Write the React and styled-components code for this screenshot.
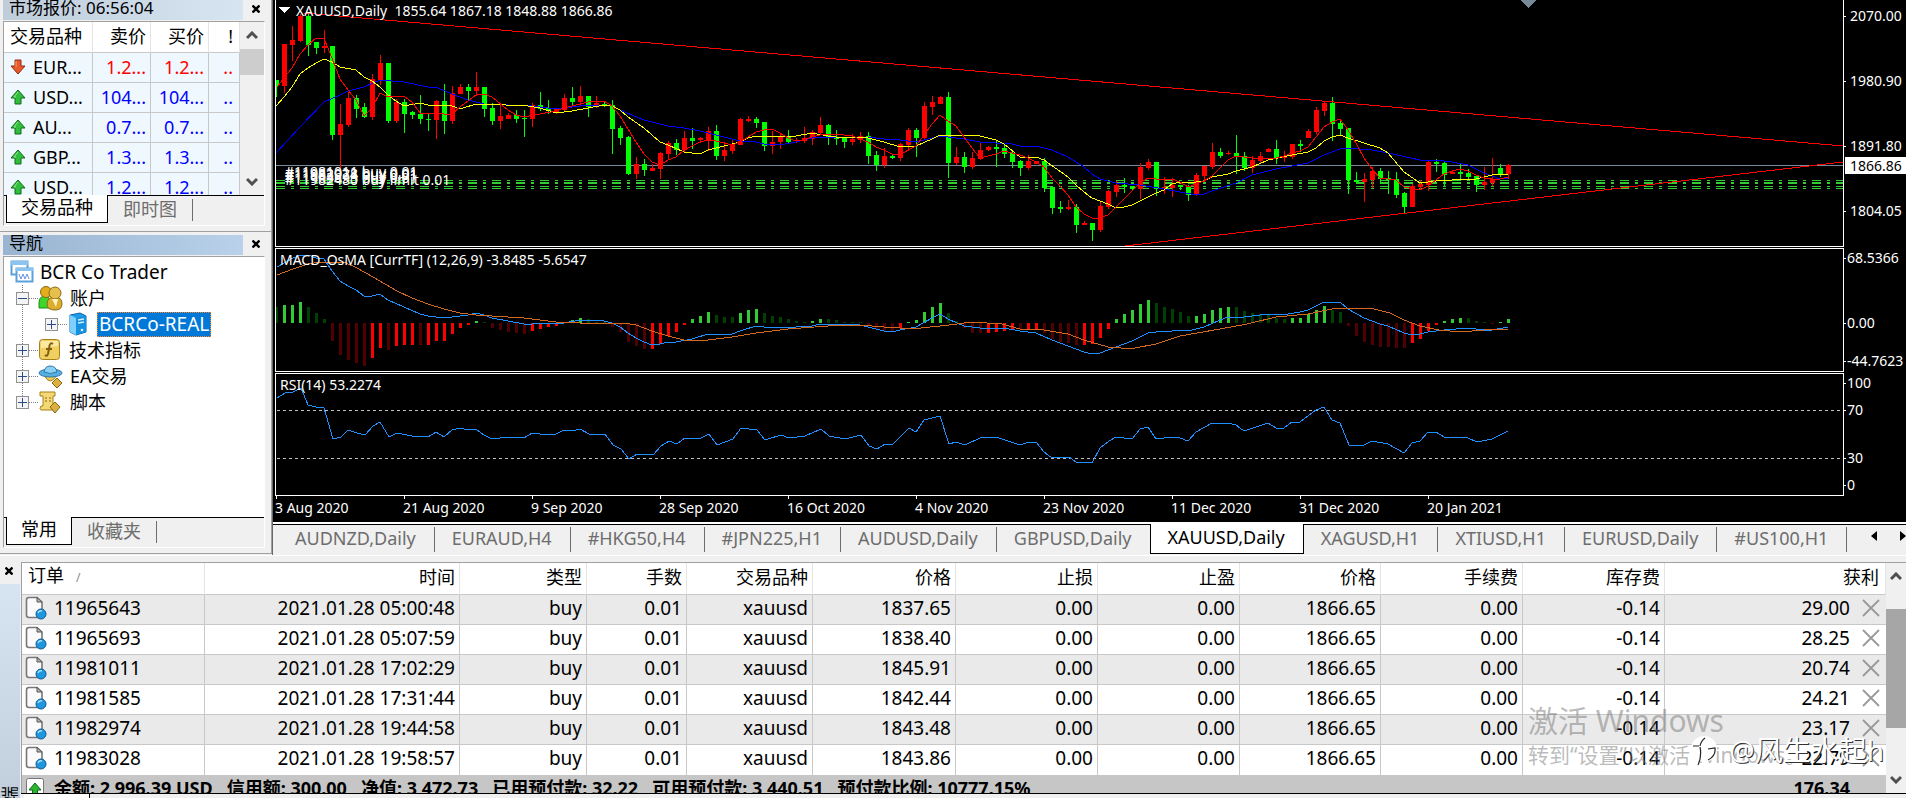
import React from 'react';
import styled, { createGlobalStyle, css } from 'styled-components';

const quotes = [
  { symbol: 'EUR...', bid: '1.2...', ask: '1.2...', down: true },
  { symbol: 'USD...', bid: '104...', ask: '104...' },
  { symbol: 'AU...', bid: '0.7...', ask: '0.7...' },
  { symbol: 'GBP...', bid: '1.3...', ask: '1.3...' },
  { symbol: 'USD...', bid: '1.2...', ask: '1.2...' },
];

const chartTabs = [
  'AUDNZD,Daily', 'EURAUD,H4', '#HKG50,H4', '#JPN225,H1', 'AUDUSD,Daily', 'GBPUSD,Daily',
  'XAUUSD,Daily', 'XAGUSD,H1', 'XTIUSD,H1', 'EURUSD,Daily', '#US100,H1',
];

const columns = [
  ['订单', 183], ['时间', 255], ['类型', 127], ['手数', 100], ['交易品种', 126], ['价格', 143],
  ['止损', 142], ['止盈', 142], ['价格', 141], ['手续费', 142], ['库存费', 142], ['获利', null],
];

const orders = [
  ['11965643', '2021.01.28 05:00:48', '1837.65', '29.00'],
  ['11965693', '2021.01.28 05:07:59', '1838.40', '28.25'],
  ['11981011', '2021.01.28 17:02:29', '1845.91', '20.74'],
  ['11981585', '2021.01.28 17:31:44', '1842.44', '24.21'],
  ['11982974', '2021.01.28 19:44:58', '1843.48', '23.17'],
  ['11983028', '2021.01.28 19:58:57', '1843.86', '22.79'],
];

// direction, high, body top, body bottom, low
const candles = `g80,80,86,97 r44,44,86,93 r26,40,45,61 r14,16,41,42 g14,16,45,56 g42,42,48,54 r30,46,48,53 g46,46,135,140
r104,124,135,170 r92,98,125,127 g95,98,109,118 g103,107,117,118 r74,79,117,120 r55,63,80,85 g63,63,121,123 r99,102,121,123
g99,102,114,133 g111,112,115,119 g95,114,119,124 g113,119,120,131 r100,101,120,139 g84,101,121,134 r86,93,121,124 r84,87,94,94
g84,87,91,101 r72,87,91,96 g87,87,109,117 g103,108,121,125 r105,116,121,129 r113,115,119,119 g110,115,119,123 g110,118,119,137
r103,105,119,127 g92,105,109,111 g100,108,111,114 r109,109,112,114 r94,98,110,112 g87,98,102,107 r86,96,102,106 g96,96,107,117
r96,103,107,108 g102,104,106,107 g100,105,129,154 g126,128,138,145 g136,137,174,175 r157,164,174,179 g159,164,170,176 r164,168,171,171
r152,153,169,179 r141,143,154,159 g139,143,150,155 r131,138,150,153 g128,138,141,149 r137,138,140,143 r127,131,140,151 g125,131,156,160
r142,150,156,161 r140,144,151,154 r118,119,145,145 r116,119,121,122 g117,119,123,128 g122,122,146,151 r131,142,146,154 r133,136,142,149
g130,136,142,143 r138,140,141,143 r127,138,141,143 r130,132,139,145 r117,125,133,135 g124,125,138,145 g130,137,139,145 g138,138,142,148
r134,139,142,145 r132,136,140,143 g132,136,156,164 g151,155,165,171 r148,156,165,168 g154,156,158,159 r143,144,158,161 r128,130,145,151
g128,130,138,157 r102,106,138,139 r96,102,107,115 r96,97,104,104 g92,97,163,178 r147,157,163,165 g152,157,167,173 r152,158,167,169
r143,150,159,160 r146,147,150,151 g141,147,149,167 g144,148,154,158 g152,153,162,168 g160,161,168,176 r155,161,168,170 r161,161,164,164
g158,161,188,192 g187,187,208,214 g201,207,209,213 r200,207,209,210 g204,207,225,233 r221,223,225,225 g223,223,230,241 r201,206,230,232
r190,191,207,209 r181,185,192,197 g178,185,187,193 g186,186,189,190 r163,167,189,199 r159,162,168,170 g162,162,189,196 r177,187,189,194
r178,185,188,197 g185,185,187,190 g185,186,195,201 r173,175,195,196 r166,166,176,182 r143,152,167,169 g148,152,156,158 r151,153,154,155
g135,153,157,174 g152,156,168,171 r156,160,168,173 r152,156,161,163 r148,149,152,152 g140,149,158,164 r151,156,158,162 r144,144,157,159
g140,144,146,152 r129,131,138,138 r107,110,132,134 r101,103,111,116 g97,103,124,141 g120,123,129,136 g128,128,180,194 g172,180,182,184
r173,179,182,202 r167,171,180,188 g168,171,179,184 g171,178,180,194 g172,179,195,198 g192,193,207,213 r184,186,207,207 r180,184,187,190
r161,162,185,191 g159,162,164,172 g162,163,175,186 r170,172,174,174 g164,172,174,180 g169,173,177,180 g175,176,185,192 r167,182,185,190
r158,179,183,186 g164,168,174,177 r164,165,174,179`.split(/\s+/);

// upper case is a growing bar, lower case a shrinking one
const histogram = `g16 G18 G18 G21 g16 g10 g4 r18 r32 r37 r40 r43 R35 R25 r27 R23 R22 R22 r22 R22 R18 R18 R11 R5 R2 G2 g1 r5 r7 r9
r10 r11 R8 R6 R4 R3 r0 G3 G5 g4 g1 g1 r4 r9 r19 r23 r26 R26 R21 R13 R9 R2 G4 G7 G11 g8 g6 g6 G10 G13 G14 g10 g7 g6 g4 g2 g1 G2
G4 g4 g3 g1 g1 g1 r3 r6 r8 r8 R5 G1 G3 G11 G16 G20 g10 g2 r5 r10 r10 R10 R9 R8 R7 r6 R6 R6 r10 r16 r19 r20 r22 R22 R21 R15 R6
G4 G9 G13 G19 G23 g20 g16 g14 g11 g7 G7 G9 G13 G15 G16 g16 g12 g10 g9 g8 g5 g4 G5 G5 G9 G13 G17 g13 g11 r3 r13 r19 r22 r24 r24
r25 r25 R20 R16 R8 R2 G2 G4 G5 g5 g2 g1 r1 G1 G4`.split(/\s+/);

const barColors = { G: '#32cd32', g: '#004000', R: '#ff0000', r: '#500000' };

const maRed = `277,87 292,68 300,54 308,45 316,38 324,39 328,48 340,79 348,90 356,100 364,116 372,108 380,93 388,97 404,96 412,102
420,113 444,114 452,114 460,107 476,95 484,94 492,97 508,110 516,115 524,117 540,114 556,111 564,108 572,106 588,102 604,101 612,106
620,116 628,129 636,142 644,154 652,162 660,165 668,160 676,157 684,150 692,146 700,142 708,140 716,141 724,143 732,145 740,142
748,137 756,132 764,130 772,129 780,133 788,138 796,141 804,140 812,137 820,135 828,134 836,134 852,136 860,139 868,142 876,147
884,150 892,154 900,155 908,150 916,146 924,135 932,124 940,115 948,121 956,126 964,137 972,148 980,158 988,156 996,154 1004,151
1012,153 1020,155 1028,158 1036,162 1044,167 1052,178 1060,186 1068,195 1076,207 1084,214 1092,218 1100,218 1108,215 1116,207
1124,199 1132,191 1140,183 1148,178 1156,179 1172,179 1180,182 1188,187 1196,184 1204,181 1212,176 1220,168 1228,160 1236,156
1244,157 1252,158 1276,158 1284,156 1292,153 1300,151 1308,147 1316,137 1324,127 1332,122 1340,119 1348,130 1356,143 1364,158
1372,169 1380,178 1396,180 1404,187 1420,190 1428,186 1436,180 1444,174 1452,171 1460,169 1468,171 1476,175 1484,178 1492,179
1500,179 1508,177`;

const maYellow = `276,106 284,97 292,87 300,74 308,68 316,63 324,59 332,62 340,67 356,70 364,77 372,81 380,87 388,95 396,101 404,106
420,103 428,105 452,106 460,109 476,104 484,104 528,106 540,108 556,113 572,111 588,108 604,105 612,106 620,110 628,117 644,128
652,135 660,142 668,145 684,152 700,154 708,150 724,146 740,142 748,138 756,136 780,136 788,137 796,136 812,133 828,136 844,138
860,137 868,138 884,142 900,147 916,146 932,139 940,135 956,135 980,136 996,140 1004,144 1020,157 1036,157 1044,160 1068,177
1076,185 1084,192 1092,198 1100,201 1108,204 1116,208 1124,207 1132,205 1140,201 1148,197 1156,193 1164,190 1172,184 1180,182
1188,183 1196,182 1204,181 1212,177 1228,174 1236,171 1252,167 1268,160 1292,155 1308,152 1316,148 1324,141 1332,137 1340,135
1348,138 1364,143 1380,148 1388,153 1404,172 1420,183 1436,181 1452,180 1476,179 1492,175 1508,174`;

const maBlue = `276,153 300,127 324,102 340,95 348,91 364,87 380,80 404,82 428,87 438,88 452,94 468,100 484,104 508,105 532,106
548,108 564,108 580,106 604,105 612,106 620,110 644,120 668,126 684,128 700,131 724,137 740,141 756,142 764,144 780,145 796,142
812,138 828,137 868,137 884,139 900,140 916,142 932,138 940,136 948,137 964,139 980,142 996,143 1012,144 1020,146 1036,146
1052,150 1068,157 1084,167 1092,174 1100,179 1116,183 1140,185 1164,189 1180,192 1196,195 1204,194 1212,191 1236,183 1252,175
1276,169 1292,166 1308,163 1324,155 1340,149 1348,148 1372,150 1388,153 1420,160 1436,160 1452,162 1468,165 1484,173 1500,179
1508,178`;

const macdLine = `277,267 293,258 301,255 308,255 316,258 324,259 332,271 340,281 348,286 356,290 364,296 372,296 380,294 388,300
404,307 420,314 428,316 436,317 444,318 452,317 468,315 476,313 484,315 492,318 508,321 524,324 532,324 564,323 580,320 596,320
604,321 612,323 620,327 628,333 636,338 644,342 652,345 660,344 668,342 676,342 692,339 708,334 716,335 732,334 740,331 756,326
764,327 796,327 812,326 820,324 840,324 860,325 868,327 884,331 892,332 900,330 916,327 932,318 940,314 948,319 964,326 980,328
1004,328 1020,331 1036,333 1052,340 1068,346 1084,352 1092,354 1100,353 1108,350 1124,344 1132,341 1148,333 1156,332 1172,331
1180,330 1188,331 1204,327 1220,320 1228,317 1244,317 1268,314 1288,314 1300,312 1308,310 1324,302 1340,302 1348,309 1364,318
1380,324 1388,326 1404,333 1412,335 1420,334 1428,332 1444,330 1468,328 1484,330 1492,330 1508,327`;

const signalLine = `277,275 293,269 308,264 320,262 344,262 357,268 373,277 397,291 412,298 428,304 444,309 460,313 476,315 508,317
524,318 556,322 580,323 597,323 624,323 636,325 652,331 668,336 684,340 708,340 732,337 756,333 788,329 828,326 860,325 884,327
900,328 921,328 949,325 972,322 1002,324 1020,329 1044,330 1068,334 1084,340 1108,347 1121,348 1135,348 1156,344 1180,336
1220,329 1247,324 1276,317 1308,314 1332,309 1345,308 1370,308 1390,313 1404,320 1420,326 1439,330 1460,332 1484,330 1508,329`;

const rsiLine = `277,398 285,393 293,392 301,388 308,405 316,407 324,408 333,439 341,437 348,430 357,433 365,435 373,426 380,422
389,437 397,433 412,436 428,437 436,432 444,437 452,430 460,428 468,430 476,429 484,435 492,439 508,437 524,438 532,433 548,435
556,434 564,430 572,431 580,429 589,434 605,434 613,445 621,449 629,459 637,454 653,455 661,446 669,441 677,444 685,438 701,438
709,434 717,445 733,439 741,428 757,430 765,440 781,435 789,438 805,436 821,429 829,436 845,439 861,435 869,446 877,449 885,444
892,445 909,428 916,432 924,420 940,416 949,444 956,442 965,445 980,438 996,437 1020,445 1029,442 1036,442 1044,452 1052,458
1069,457 1076,462 1092,463 1100,448 1109,441 1116,437 1132,439 1140,429 1148,427 1156,439 1172,437 1180,438 1188,441 1196,432
1212,423 1228,423 1236,425 1244,431 1268,423 1276,428 1284,428 1292,422 1300,422 1316,410 1324,407 1332,420 1340,423 1349,445
1364,445 1372,441 1388,444 1404,453 1412,443 1420,441 1428,432 1436,432 1444,437 1468,438 1477,442 1492,439 1508,431`;

const orderLines = [
  [180, '#11981011 buy 0.01'],
  [182, '#11983028 buy 0.01'],
  [183, '#11982974 buy 0.01'],
  [186, '#11965693 buy 0.01'],
  [188, '#11982480 buy limit 0.01'],
];

const dates = [
  '3 Aug 2020', '21 Aug 2020', '9 Sep 2020', '28 Sep 2020', '16 Oct 2020',
  '4 Nov 2020', '23 Nov 2020', '11 Dec 2020', '31 Dec 2020', '20 Jan 2021',
];

const Line = ({ points, color }) => (
  <polyline points={points} fill="none" stroke={color} strokeWidth="1" />
);

const Chevron = ({ up }) => (
  <svg width="12" height="9" viewBox="0 0 12 9">
    <path d={up ? 'M1 7 L6 2 L11 7' : 'M1 2 L6 7 L11 2'} fill="none" stroke="#505050" strokeWidth="3" />
  </svg>
);

const Cross = () => (
  <svg width="8" height="8" viewBox="0 0 8 8">
    <path d="M0.5 0.5 L7.5 7.5 M7.5 0.5 L0.5 7.5" stroke="#000" strokeWidth="2.4" />
  </svg>
);

const QuoteArrow = ({ down }) => (
  <svg width="16" height="16" viewBox="0 0 16 16">
    <path
      d={down ? 'M5 1 H11 V7 H15 L8 15 L1 7 H5 Z' : 'M8 1 L15 9 H11 V15 H5 V9 H1 Z'}
      fill={down ? '#e8592b' : '#2fbf3c'}
      stroke={down ? '#8c2a12' : '#11681b'}
      strokeLinejoin="round"
    />
    <path d={down ? 'M6 2 V8' : 'M8 3 L4 8 H6'} fill="none" stroke={down ? '#ffa27a' : '#93ea8c'} />
  </svg>
);

const TerminalIcon = () => (
  <svg width="24" height="24" viewBox="0 0 24 24">
    <rect x="1.5" y="1.5" width="16" height="13" fill="#fff" stroke="#5ba0d8" strokeWidth="2" />
    <rect x="1" y="1" width="17" height="4" fill="#8cc4f0" />
    <rect x="6.5" y="8.5" width="16" height="13" fill="#fff" stroke="#5ba0d8" strokeWidth="2" />
    <rect x="6" y="8" width="17" height="3" fill="#8cc4f0" />
    <path d="M9 14 L11 19 L13 14 L15 19 L17 14 L19 19" fill="none" stroke="#6a8fe0" />
  </svg>
);

const AccountsIcon = () => (
  <svg width="25" height="25" viewBox="0 0 25 25">
    <path d="M1 17 Q1 10 7 10 Q12 10 12 17 V22 H1 Z" fill="#3fd62c" stroke="#1c8a14" />
    <circle cx="8" cy="6" r="5.5" fill="#e5ad1e" stroke="#8a650c" />
    <path d="M9 18 Q9 11 17 11 Q24 11 24 18 Q24 24 17 24 Q9 24 9 18 Z" fill="#dcae30" stroke="#8a6914" />
    <circle cx="17" cy="7" r="6" fill="#e6c04c" stroke="#8a6914" />
    <path d="M14 13 L18 21 L20 13" fill="#fff3bf" />
  </svg>
);

const ServerIcon = () => (
  <svg width="24" height="24" viewBox="0 0 24 24">
    <path d="M3 3 L13 1 L19 4 V20 L9 23 L3 20 Z" fill="#1f9ce8" stroke="#0f62a8" />
    <path d="M3 3 L9 6 V23 L3 20 Z" fill="#7fd0ff" />
    <path d="M9 6 L19 4 V20 L9 23 Z" fill="#1690e0" />
    <path d="M11 8 L17 7 M11 11 L17 10" stroke="#d5f0ff" strokeWidth="1.5" />
    <circle cx="15" cy="18" r="1.3" fill="#d5f0ff" />
  </svg>
);

const FunctionIcon = () => (
  <svg width="24" height="24" viewBox="0 0 24 24">
    <rect x="1.5" y="1.5" width="20" height="20" rx="3" fill="#f0d060" stroke="#a88018" />
    <path d="M3 10 V3 H20 V8 Z" fill="#fae9a0" />
    <path d="M15 6 Q12 4 11.5 8 L10 16 Q9 19 7 17 M8 11 H14" fill="none" stroke="#806010" strokeWidth="2" />
  </svg>
);

const ExpertIcon = () => (
  <svg width="25" height="25" viewBox="0 0 25 25">
    <path d="M6 11 Q12 23 19 11 Z" fill="#f0cc52" stroke="#a88018" />
    <ellipse cx="12.5" cy="9" rx="11.5" ry="4" fill="#57aee0" stroke="#2d77a8" />
    <path d="M6 8 Q7 2 12 2 Q18 2 19 8 Q12 11 6 8 Z" fill="#8ad0f4" stroke="#2d77a8" />
    <path d="M19 14 L24 19 L19 24 L14 19 Z" fill="#dcb040" stroke="#8a6914" />
  </svg>
);

const ScriptIcon = () => (
  <svg width="25" height="25" viewBox="0 0 25 25">
    <path d="M2 2 H17 V6 H15 V17 H17 V20 H3 Q1 19 3 16 H5 V6 H2 Z" fill="#f4d873" stroke="#a88018" />
    <path d="M7 8 H9 M11 8 H13 M7 11 H9 M11 11 H13" stroke="#8a6914" />
    <path d="M17 12 L22 17 L17 23 L12 17 Z" fill="#dcb040" stroke="#8a6914" />
  </svg>
);

const OrderIcon = () => (
  <svg width="22" height="24" viewBox="0 0 22 24">
    <path d="M4 1.5 H12 L17 6 V19 Q17 21.5 15 21.5 H4 Q1.5 21.5 1.5 19 V4 Q1.5 1.5 4 1.5 Z" fill="#fbfbfb" stroke="#777" strokeWidth="1.6" />
    <path d="M12 1.5 V6 H17 Z" fill="#bbb" stroke="#555" />
    <circle cx="16" cy="18" r="5" fill="#1e96e0" stroke="#0d5b96" />
    <path d="M13 17 Q14 14 17 15" fill="none" stroke="#a8e0ff" strokeWidth="1.4" />
  </svg>
);

const BalanceIcon = () => (
  <svg width="18" height="20" viewBox="0 0 18 20">
    <rect x="0.5" y="0.5" width="17" height="19" rx="2" fill="#fff" stroke="#777" />
    <path d="M9 5 L15 12 H11.5 V18 H6.5 V12 H3 Z" fill="#2ab52f" stroke="#11681b" />
  </svg>
);

const RemoveIcon = () => (
  <svg width="18" height="18" viewBox="0 0 18 18">
    <path d="M1 1 L17 17 M17 1 L1 17" stroke="#999" strokeWidth="1.8" />
  </svg>
);

const MarketWatch = () => (
  <Panel>
    <TitleRow>
      <Caption $pale>市场报价: 06:56:04</Caption>
      <CloseButton aria-label="关闭"><Cross /></CloseButton>
    </TitleRow>
    <Frame>
      <QuoteArea>
        <QuoteTable>
          <colgroup>
            <col width="89" />
            <col width="58" />
            <col width="58" />
            <col />
          </colgroup>
          <thead>
            <tr><th>交易品种</th><th>卖价</th><th>买价</th><th>!</th></tr>
          </thead>
          <tbody>
            {quotes.map((quote, i) => (
              <QuoteRow key={i} $down={quote.down}>
                <td><Symbol><QuoteArrow down={quote.down} />{quote.symbol}</Symbol></td>
                <td>{quote.bid}</td>
                <td>{quote.ask}</td>
                <td>..</td>
              </QuoteRow>
            ))}
          </tbody>
        </QuoteTable>
        <Scrollbar>
          <ScrollButton aria-label="上"><Chevron up /></ScrollButton>
          <Thumb $size={26} />
          <ScrollButton $last aria-label="下"><Chevron /></ScrollButton>
        </Scrollbar>
      </QuoteArea>
      <PanelTabs>
        <PanelTab $active>交易品种</PanelTab>
        <PanelTab>即时图</PanelTab>
      </PanelTabs>
    </Frame>
  </Panel>
);

const Navigator = () => (
  <Panel $spaced>
    <TitleRow>
      <Caption>导航</Caption>
      <CloseButton aria-label="关闭"><Cross /></CloseButton>
    </TitleRow>
    <Frame>
      <Tree>
        <TreeRow $indent={6}><TerminalIcon /><RootLabel>BCR Co Trader</RootLabel></TreeRow>
        <Branch>
          <TreeRow $indent={12}>
            <Expander $open aria-label="折叠" /><Dash /><AccountsIcon /><TreeLabel>账户</TreeLabel>
          </TreeRow>
          <TreeRow $indent={41}>
            <Expander aria-label="展开" /><Dash /><ServerIcon /><Selected>BCRCo-REAL</Selected>
          </TreeRow>
          <TreeRow $indent={12}>
            <Expander aria-label="展开" /><Dash /><FunctionIcon /><TreeLabel>技术指标</TreeLabel>
          </TreeRow>
          <TreeRow $indent={12}>
            <Expander aria-label="展开" /><Dash /><ExpertIcon /><TreeLabel>EA交易</TreeLabel>
          </TreeRow>
          <TreeRow $indent={12}>
            <Expander aria-label="展开" /><Dash /><ScriptIcon /><TreeLabel>脚本</TreeLabel>
          </TreeRow>
        </Branch>
      </Tree>
      <PanelTabs>
        <PanelTab $active>常用</PanelTab>
        <PanelTab>收藏夹</PanelTab>
      </PanelTabs>
    </Frame>
  </Panel>
);

const PriceChart = () => (
  <Plot $height={246}>
    <g transform="translate(-276 0)">
      <line x1="276" x2="4000" y1="165.5" y2="165.5" stroke="#778899" />
      {orderLines.map(([y]) => (
        <line key={y} x1="276" x2="4000" y1={y + 0.5} y2={y + 0.5} stroke="#32cd32" strokeDasharray="9 6 3 6" />
      ))}
      {candles.map((candle, i) => {
        const [high, top, bottom, low] = candle.slice(1).split(',').map(Number);
        const x = 276 + i * 8;
        return (
          <g key={i} fill={candle[0] === 'g' ? '#00ff00' : '#ff0000'}>
            <rect x={x} y={high} width="1" height={low - high} />
            <rect x={x - 2} y={top} width="5" height={bottom - top} />
          </g>
        );
      })}
      <Line points={maBlue} color="#0000ff" />
      <Line points={maYellow} color="#ffff00" />
      <Line points={maRed} color="#ff0000" />
      <Line points="304,13 1843,146" color="#ff0000" />
      <Line points="1125,246 1843,162" color="#ff0000" />
      <path d="M1520 0 H1537 L1528.5 8 Z" fill="#778899" />
      <path d="M279 7 H290 L284.5 13 Z" fill="#fff" />
    </g>
    {orderLines.map(([y, label]) => <text key={y} x="9" y={y - 3}>{label}</text>)}
  </Plot>
);

const MacdChart = () => (
  <Plot $height={122}>
    <g transform="translate(-276 -249)">
      {histogram.map((bar, i) => {
        const size = Number(bar.slice(1));
        const rising = bar[0].toLowerCase() === 'g';
        return (
          <rect key={i} x={275 + i * 8} y={rising ? 323 - size : 323} width="3" height={size} fill={barColors[bar[0]]} />
        );
      })}
      <Line points={macdLine} color="#1e90ff" />
      <Line points={signalLine} color="#d2691e" />
    </g>
  </Plot>
);

const RsiChart = () => (
  <Plot $height={121}>
    <g transform="translate(-276 -374)">
      <path d="M277 410.5 H4000 M277 458.5 H4000" stroke="#c0c0c0" strokeDasharray="3 3" />
      <Line points={rsiLine} color="#1e90ff" />
    </g>
  </Plot>
);

const ChartWindow = () => (
  <ChartColumn>
    <ChartArea>
      <Pane>
        <PlotBox $first>
          <PlotTitle $offset={16}>XAUUSD,Daily&nbsp; 1855.64 1867.18 1848.88 1866.86</PlotTitle>
          <PriceChart />
        </PlotBox>
        <Scale $rows="65px 65px 65px 24px" $top={7}>
          <Mark>2070.00</Mark><Mark>1980.90</Mark><Mark>1891.80</Mark><Mark>1804.05</Mark>
          <CurrentPrice>1866.86</CurrentPrice>
        </Scale>
      </Pane>
      <Pane>
        <PlotBox>
          <PlotTitle>MACD_OsMA [CurrTF] (12,26,9) -3.8485 -5.6547</PlotTitle>
          <MacdChart />
        </PlotBox>
        <Scale $rows="65px 38px 18px" $top={1}>
          <Mark $tight>68.5366</Mark><Mark $tight>0.00</Mark><Mark $tight>-44.7623</Mark>
        </Scale>
      </Pane>
      <Pane>
        <PlotBox>
          <PlotTitle>RSI(14) 53.2274</PlotTitle>
          <RsiChart />
        </PlotBox>
        <Scale $rows="27px 48px 27px 18px" $top={1}>
          <Mark $tight>100</Mark><Mark $tight>70</Mark><Mark $tight>30</Mark><Mark $tight>0</Mark>
        </Scale>
      </Pane>
      <DateAxis>{dates.map((date) => <DateMark key={date}>{date}</DateMark>)}</DateAxis>
    </ChartArea>
    <ChartTabs>
      {chartTabs.map((tab) => (
        <ChartTab key={tab} $active={tab === 'XAUUSD,Daily'}>{tab}</ChartTab>
      ))}
      <TabArrows>
        <ArrowButton aria-label="左">
          <svg width="6" height="10"><path d="M6 0 V10 L0 5 Z" /></svg>
        </ArrowButton>
        <ArrowButton aria-label="右">
          <svg width="6" height="10"><path d="M0 0 V10 L6 5 Z" /></svg>
        </ArrowButton>
      </TabArrows>
    </ChartTabs>
  </ChartColumn>
);

const Terminal = () => (
  <TerminalRow>
    <Side>
      <CloseButton aria-label="关闭"><Cross /></CloseButton>
      <SideCaption>终端</SideCaption>
    </Side>
    <TerminalMain>
      <OrderArea>
        <OrderBody>
          <OrderTable>
            <colgroup>
              {columns.map(([, width], i) => <col key={i} width={width || undefined} />)}
            </colgroup>
            <thead>
              <tr>
                {columns.map(([title], i) => <th key={i}>{title}{i === 0 && <SortMark>/</SortMark>}</th>)}
              </tr>
            </thead>
            <tbody>
              {orders.map(([id, time, open, profit]) => (
                <tr key={id}>
                  <td><OrderCell><OrderIcon />{id}</OrderCell></td>
                  <td>{time}</td>
                  <td>buy</td>
                  <td>0.01</td>
                  <td>xauusd</td>
                  <td>{open}</td>
                  <td>0.00</td>
                  <td>0.00</td>
                  <td>1866.65</td>
                  <td>0.00</td>
                  <td>-0.14</td>
                  <td>
                    <Profit>{profit}<button aria-label="平仓"><RemoveIcon /></button></Profit>
                  </td>
                </tr>
              ))}
            </tbody>
          </OrderTable>
          <Summary>
            <BalanceIcon />
            <Balance>
              <span>余额: 2 996.39 USD</span>
              <span>信用额: 300.00</span>
              <span>净值: 3 472.73</span>
              <span>已用预付款: 32.22</span>
              <span>可用预付款: 3 440.51</span>
              <span>预付款比例: 10777.15%</span>
            </Balance>
            <Total>176.34</Total>
          </Summary>
        </OrderBody>
        <Scrollbar $wide>
          <ScrollButton aria-label="上"><Chevron up /></ScrollButton>
          <Thumb $size={119} $dark />
          <ScrollButton $last aria-label="下"><Chevron /></ScrollButton>
        </Scrollbar>
      </OrderArea>
      <BottomTabs><BottomTab /></BottomTabs>
      <Activation>
        <p>激活 Windows</p>
        <small>转到“设置”以激活 Windows。</small>
      </Activation>
      <Author>
        <svg width="28" height="32" viewBox="0 0 28 32">
          <circle cx="14" cy="15" r="13" fill="#fff" />
          <path d="M15 4 Q11 7 10 12 M3 12 H9 M10 13 Q12 22 8 31 M18 15 L25 14 Q26 22 18 26" fill="none" stroke="#222" strokeWidth="1.2" />
        </svg>
        @风生水起h
      </Author>
    </TerminalMain>
  </TerminalRow>
);

export default function App() {
  return (
    <Window>
      <GlobalStyle />
      <Workspace>
        <Sidebar>
          <MarketWatch />
          <Navigator />
        </Sidebar>
        <ChartWindow />
      </Workspace>
      <Terminal />
    </Window>
  );
}

const GlobalStyle = createGlobalStyle`
  * {
    box-sizing: border-box;
  }

  body {
    margin: 0;
    background: #f0f0f0;
    color: #000;
    font-family: 'Noto Sans', 'Noto Sans CJK SC', sans-serif;
    font-size: 18px;
  }

  button {
    padding: 0;
    border: 0;
    background: none;
    color: inherit;
    font: inherit;
  }

  svg {
    display: block;
    flex: none;
  }
`;

const Window = styled.div`
  display: flex;
  flex-direction: column;
  height: 100vh;
  overflow: hidden;
`;

const Workspace = styled.div`
  display: flex;
  border-bottom: 1px solid #fff;
`;

const Sidebar = styled.aside`
  flex: none;
  width: 273px;
  border-right: 1px solid #696969;
`;

const Panel = styled.section`
  padding: ${({ $spaced }) => ($spaced ? '3px' : '0')} 6px 5px 3px;
  border-right: 1px solid #a0a0a0;
  border-bottom: 1px solid #a0a0a0;
`;

const TitleRow = styled.header`
  display: flex;
  height: 20px;
  margin-bottom: 1px;
`;

const Caption = styled.h2`
  flex: 1;
  margin: 0;
  padding-left: 6px;
  overflow: hidden;
  background: ${({ $pale }) => ($pale ? 'linear-gradient(90deg, #bfcddb, #d7e4f2)' : 'linear-gradient(90deg, #99b4d1, #b9d1ea)')};
  font-size: 17px;
  font-weight: 400;
  line-height: 15px;
`;

const CloseButton = styled.button`
  display: flex;
  align-items: center;
  justify-content: center;
  width: 22px;
  height: 18px;
  padding-left: 4px;
`;

const Frame = styled.div`
  border: 1px solid;
  border-color: #a0a0a0 #fff #fff #a0a0a0;
`;

const QuoteArea = styled.div`
  display: flex;
  height: 173px;
  overflow: hidden;
`;

const cells = css`
  border-spacing: 0;
  table-layout: fixed;
  background: #fff;

  th, td {
    height: 30px;
    padding: 0 4px 2px 0;
    border-right: 1px solid #c8c8c8;
    border-bottom: 1px solid #c8c8c8;
    font-weight: 400;
    line-height: 26px;
    text-align: right;
    white-space: nowrap;
  }

  th {
    height: 31px;
    border-right-color: #e5e5e5;
  }

  th:first-child, td:first-child {
    padding-left: 6px;
    text-align: left;
  }

  th:last-child, td:last-child {
    padding-right: 6px;
  }
`;

const QuoteTable = styled.table`
  ${cells}
  flex: 1;
  align-self: flex-start;
  width: 236px;
`;

const QuoteRow = styled.tr`
  background: #f0f8ff;
  color: ${({ $down }) => ($down ? '#f00' : '#00f')};

  td:first-child {
    color: #000;
  }
`;

const Symbol = styled.span`
  display: flex;
  align-items: center;
  gap: 7px;
`;

const Scrollbar = styled.div`
  display: flex;
  flex: none;
  flex-direction: column;
  width: ${({ $wide }) => ($wide ? '20px' : '24px')};
  background: #f0f0f0;
`;

const ScrollButton = styled.button`
  display: flex;
  align-items: center;
  justify-content: center;
  height: 27px;
  margin-top: ${({ $last }) => ($last ? 'auto' : '0')};
`;

const Thumb = styled.div`
  height: ${({ $size }) => $size}px;
  margin-top: ${({ $dark }) => ($dark ? '19px' : '0')};
  background: ${({ $dark }) => ($dark ? '#a6a6a6' : '#cdcdcd')};
`;

const PanelTabs = styled.div`
  display: flex;
  align-items: flex-start;
  height: 30px;
  padding-left: 2px;
  background: #f0f0f0;
  box-shadow: inset 0 1px #000;
`;

const PanelTab = styled.button`
  height: 22px;
  margin-top: 4px;
  padding: 0 15px 2px;
  border-right: 1px solid #6d6d6d;
  color: #6d6d6d;
  line-height: 20px;

  ${({ $active }) => $active && css`
    height: 28px;
    margin-top: 0;
    padding: 0 14px 2px;
    border: 1px solid #000;
    border-top: 0;
    background: #fff;
    color: #000;
    line-height: 25px;
  `}
`;

const Tree = styled.div`
  height: 260px;
  padding-top: 2px;
  background: #fff;
`;

const Branch = styled.div`
  position: relative;

  &::before {
    position: absolute;
    top: 0;
    bottom: 13px;
    left: 18px;
    border-left: 1px dotted #808080;
    content: '';
  }
`;

const TreeRow = styled.div`
  position: relative;
  display: flex;
  align-items: center;
  height: 26px;
  padding-left: ${({ $indent }) => $indent}px;
  line-height: 26px;
`;

const Expander = styled.button`
  width: 13px;
  height: 13px;
  border: 1px solid #919191;
  background:
    linear-gradient(#2b4a8b, #2b4a8b) center / 9px 1px no-repeat,
    ${({ $open }) => ($open ? '' : 'linear-gradient(#2b4a8b, #2b4a8b) center / 1px 9px no-repeat,')}
    #f4f4f4;
`;

const Dash = styled.span`
  width: 9px;
  border-top: 1px dotted #808080;
`;

const TreeLabel = styled.span`
  padding-left: 7px;
`;

const RootLabel = styled(TreeLabel)`
  padding-left: 6px;
  font-size: 19px;
  line-height: 24px;
`;

const Selected = styled.span`
  margin-left: 6px;
  padding: 0 1px;
  border: 1px dotted #ff8728;
  background: #0078d7;
  color: #fff;
  font-size: 19px;
  line-height: 23px;
`;

const ChartColumn = styled.main`
  display: flex;
  flex: 1;
  flex-direction: column;
  min-width: 0;
`;

const ChartArea = styled.div`
  height: 522px;
  padding-left: 2px;
  background: #000;
  color: #fff;
  font-size: 14px;
`;

const Pane = styled.div`
  display: flex;

  & + & {
    margin-top: 1px;
  }
`;

const PlotBox = styled.div`
  position: relative;
  flex: 1;
  min-width: 0;
  border: 1px solid #fff;
  border-top-width: ${({ $first }) => ($first ? '0' : '1px')};
`;

const Plot = styled.svg.attrs({ width: '100%', shapeRendering: 'crispEdges' })`
  height: ${({ $height }) => $height}px;

  text {
    fill: #fff;
    font-size: 14px;
  }
`;

const PlotTitle = styled.div`
  position: absolute;
  top: 2px;
  left: ${({ $offset }) => ($offset || 0) + 4}px;
  line-height: 18px;
`;

const Scale = styled.div`
  position: relative;
  display: grid;
  flex: none;
  grid-template-rows: ${({ $rows }) => $rows};
  width: 62px;
  padding-top: ${({ $top }) => $top}px;
`;

const Mark = styled.div`
  display: flex;
  align-items: center;
  height: 18px;
  line-height: 18px;

  &::before {
    width: 2px;
    height: 1px;
    margin-right: ${({ $tight }) => ($tight ? '1px' : '4px')};
    background: #fff;
    content: '';
  }
`;

const CurrentPrice = styled.div`
  position: absolute;
  top: 157px;
  right: 0;
  left: 1px;
  padding-left: 5px;
  background: #fff;
  color: #000;
  line-height: 17px;
`;

const DateAxis = styled.div`
  display: flex;
`;

const DateMark = styled.div`
  flex: none;
  width: 128px;
  line-height: 18px;

  &::before {
    display: block;
    width: 1px;
    height: 3px;
    margin-left: 1px;
    background: #fff;
    content: '';
  }
`;

const ChartTabs = styled.nav`
  display: flex;
  align-items: flex-start;
  height: 33px;
  padding: 2px 0 0 5px;
  background: linear-gradient(#fff 2px, #000 2px, #000 3px, #f0f0f0 3px);
`;

const ChartTab = styled.button`
  flex: none;
  height: 25px;
  margin-top: 3px;
  padding: 0 18px 4px 17px;
  border-right: 1px solid #6d6d6d;
  color: #6d6d6d;
  line-height: 20px;
  white-space: nowrap;

  ${({ $active }) => $active && css`
    height: 30px;
    margin: 0 0 0 -1px;
    border: 1px solid #000;
    border-top: 0;
    background: #fff;
    color: #000;
  `}
`;

const TabArrows = styled.div`
  display: flex;
  gap: 23px;
  margin: 7px 0 0 auto;
`;

const ArrowButton = styled.button`
  width: 6px;
`;

const TerminalRow = styled.section`
  display: flex;
  flex: 1;
  min-height: 0;
  padding-top: 6px;
`;

const Side = styled.div`
  display: flex;
  flex: none;
  flex-direction: column;
  width: 21px;
  overflow: hidden;

  ${CloseButton} {
    flex: none;
    width: 18px;
    margin-bottom: 4px;
    padding: 0;
  }
`;

const SideCaption = styled.div`
  display: flex;
  flex: 1;
  align-items: center;
  width: 20px;
  padding-top: 202px;
  background: linear-gradient(#d7e4f2, #bfcddb);
  font-size: 17px;
  line-height: 20px;
  white-space: nowrap;
  writing-mode: sideways-lr;
`;

const TerminalMain = styled.div`
  position: relative;
  display: flex;
  flex: 1;
  flex-direction: column;
  min-width: 0;
`;

const OrderArea = styled.div`
  display: flex;
  height: 231px;
  border-top: 1px solid #a0a0a0;
  border-left: 1px solid #a0a0a0;
`;

const OrderBody = styled.div`
  flex: 1;
  min-width: 0;
  overflow: hidden;
`;

const OrderTable = styled.table`
  ${cells}
  width: 100%;

  th, td {
    padding-bottom: 4px;
    line-height: 24px;
  }

  td {
    font-size: 19px;
  }

  td:first-child {
    padding-left: 3px;
  }

  td:last-child {
    border-right: 0;
  }

  tbody tr:nth-child(odd) {
    background: #eaeaea;
  }

  tbody tr:last-child td {
    border-bottom: 0;
  }
`;

const SortMark = styled.span`
  margin-left: 12px;
  color: #888;
  font-size: 12px;
`;

const OrderCell = styled.span`
  display: flex;
  align-items: center;
  gap: 7px;
`;

const Profit = styled.span`
  display: flex;
  align-items: center;
  justify-content: flex-end;
  gap: 12px;
`;

const Summary = styled.div`
  display: flex;
  align-items: flex-start;
  height: 30px;
  padding: 3px 36px 0 4px;
  background: #c6c6c6;
  font-weight: 700;
  line-height: 20px;
`;

const Balance = styled.div`
  display: flex;
  gap: 14px;
  padding-left: 10px;
`;

const Total = styled.div`
  margin-left: auto;
`;

const BottomTabs = styled.div`
  flex: 1;
  padding-left: 3px;
  border-top: 1px solid #000;
`;

const BottomTab = styled.div`
  width: 66px;
  height: 100%;
  border-right: 1px solid #000;
  background: #fff;
`;

const Activation = styled.div`
  position: absolute;
  top: 140px;
  right: 94px;
  width: 284px;
  color: rgba(120, 120, 120, 0.5);
  pointer-events: none;
  white-space: nowrap;

  p {
    margin: 0;
    font-size: 30px;
    line-height: 38px;
  }

  small {
    font-size: 21px;
    line-height: 30px;
  }
`;

const Author = styled.div`
  position: absolute;
  top: 170px;
  right: 22px;
  display: flex;
  align-items: center;
  gap: 12px;
  color: #fff;
  font-size: 28px;
  line-height: 36px;
  text-shadow: 1px 1px 0 #333;
  pointer-events: none;
`;
